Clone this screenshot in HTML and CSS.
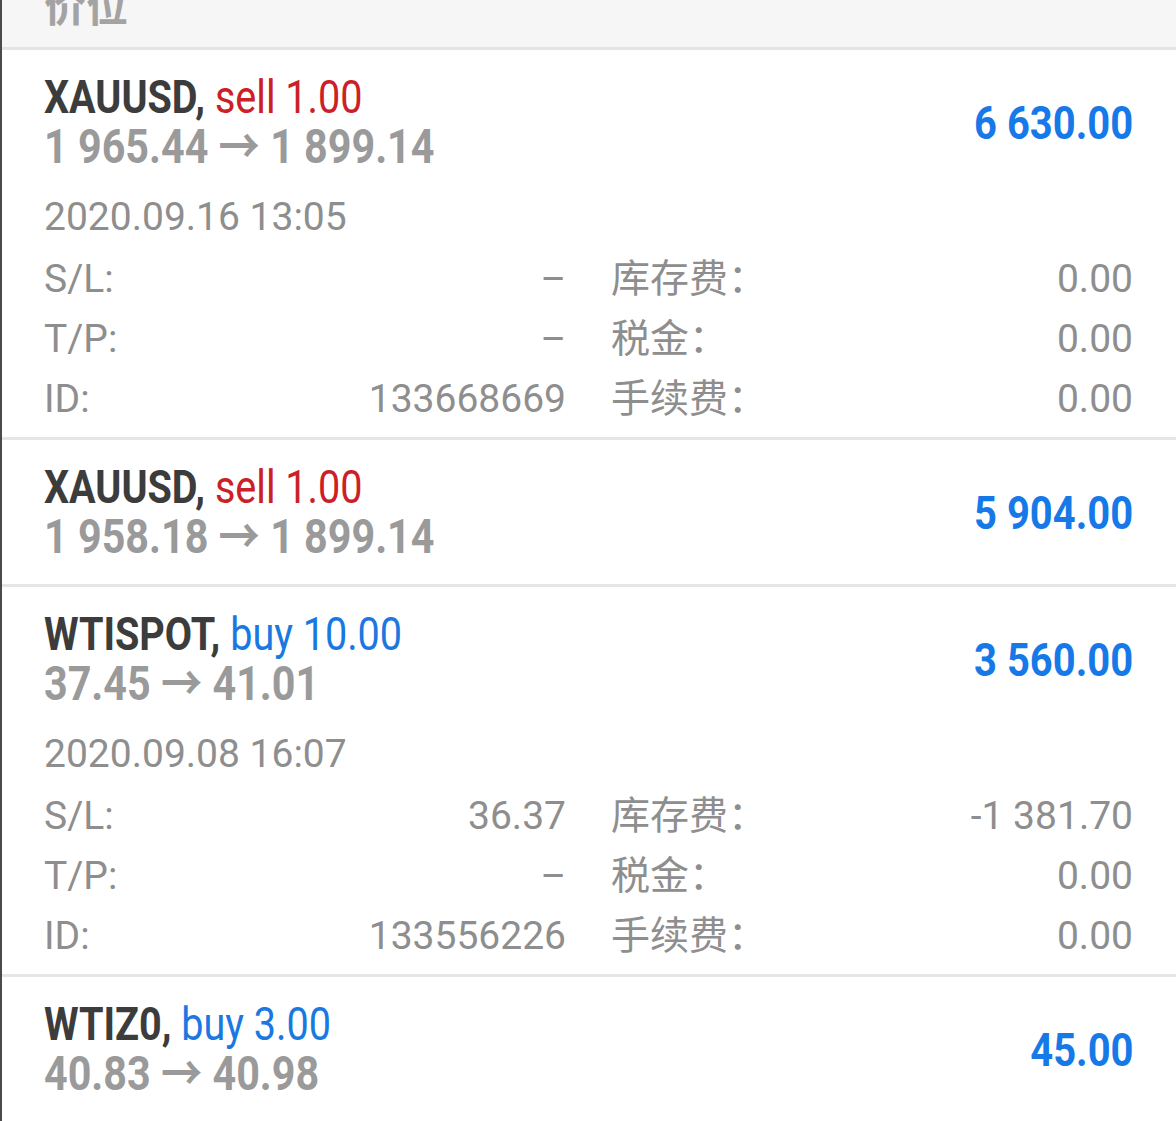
FILE: index.html
```html
<!DOCTYPE html>
<html lang="zh-CN">
<head>
    <meta charset="UTF-8">
    <meta name="viewport" content="width=device-width, initial-scale=1.0">
    <title>交易</title>
    <link rel="stylesheet" href="styles.css">
</head>
<body>
    <div class="screen">
        <div class="section-header">
            <span class="section-title">价位</span>
        </div>

        <div class="deal">
            <div class="deal-head">
                <div class="deal-main">
                    <div class="deal-symbol"><span class="cond"><b>XAUUSD,</b> <span class="sell">sell 1.00</span></span></div>
                    <div class="deal-price"><span class="cond">1 965.44 → 1 899.14</span></div>
                </div>
                <div class="deal-profit"><span class="cond">6 630.00</span></div>
            </div>
            <div class="deal-details">
                <div class="deal-time">2020.09.16 13:05</div>
                <div class="detail-grid">
                    <div class="pair"><span>S/L:</span><span>–</span></div>
                    <div class="pair"><span>库存费：</span><span>0.00</span></div>
                    <div class="pair"><span>T/P:</span><span>–</span></div>
                    <div class="pair"><span>税金：</span><span>0.00</span></div>
                    <div class="pair"><span>ID:</span><span>133668669</span></div>
                    <div class="pair"><span>手续费：</span><span>0.00</span></div>
                </div>
            </div>
        </div>

        <div class="deal collapsed">
            <div class="deal-head">
                <div class="deal-main">
                    <div class="deal-symbol"><span class="cond"><b>XAUUSD,</b> <span class="sell">sell 1.00</span></span></div>
                    <div class="deal-price"><span class="cond">1 958.18 → 1 899.14</span></div>
                </div>
                <div class="deal-profit"><span class="cond">5 904.00</span></div>
            </div>
        </div>

        <div class="deal">
            <div class="deal-head">
                <div class="deal-main">
                    <div class="deal-symbol"><span class="cond"><b>WTISPOT,</b> <span class="buy">buy 10.00</span></span></div>
                    <div class="deal-price"><span class="cond">37.45 → 41.01</span></div>
                </div>
                <div class="deal-profit"><span class="cond">3 560.00</span></div>
            </div>
            <div class="deal-details">
                <div class="deal-time">2020.09.08 16:07</div>
                <div class="detail-grid">
                    <div class="pair"><span>S/L:</span><span>36.37</span></div>
                    <div class="pair"><span>库存费：</span><span>-1 381.70</span></div>
                    <div class="pair"><span>T/P:</span><span>–</span></div>
                    <div class="pair"><span>税金：</span><span>0.00</span></div>
                    <div class="pair"><span>ID:</span><span>133556226</span></div>
                    <div class="pair"><span>手续费：</span><span>0.00</span></div>
                </div>
            </div>
        </div>

        <div class="deal collapsed">
            <div class="deal-head">
                <div class="deal-main">
                    <div class="deal-symbol"><span class="cond"><b>WTIZ0,</b> <span class="buy">buy 3.00</span></span></div>
                    <div class="deal-price"><span class="cond">40.83 → 40.98</span></div>
                </div>
                <div class="deal-profit"><span class="cond">45.00</span></div>
            </div>
        </div>
    </div>
</body>
</html>
```

FILE: styles.css
```css
body {
    margin: 0;
    padding: 0;
    background-color: #fff;
    font-family: Roboto, "Noto Sans CJK SC", sans-serif;
}

.screen {
    height: 1121px;
    overflow: hidden;
    border-left: 2px solid #4a4a4a;
    box-sizing: border-box;
}

.section-header {
    height: 47px;
    overflow: hidden;
    background-color: #f6f6f6;
    border-bottom: 3px solid #e4e4e4;
    padding-left: 42px;
}

.section-title {
    display: block;
    margin-top: -13px;
    font-size: 42px;
    line-height: 42px;
    font-weight: bold;
    color: #a3a3a3;
}

.deal {
    padding: 22px 43px 8px 42px;
    border-bottom: 3px solid #e6e6e6;
}

.deal.collapsed {
    padding-bottom: 22px;
}

.deal-head {
    display: flex;
    align-items: center;
    justify-content: space-between;
}

/* no condensed Roboto installed, so squeeze the regular face */
.cond {
    display: inline-block;
    white-space: nowrap;
    transform: scaleX(0.86);
    transform-origin: left center;
}

.deal-symbol {
    font-size: 46px;
    line-height: 50px;
    color: #3c3c3c;
}

.deal-symbol b {
    font-weight: bold;
}

.sell {
    color: #cc2027;
}

.buy {
    color: #1a78e0;
}

.deal-price {
    font-size: 48px;
    line-height: 50px;
    font-weight: bold;
    color: #9a9a9b;
}

.deal-profit {
    font-size: 47px;
    font-weight: bold;
    color: #1779e8;
}

.deal-profit .cond {
    transform: scaleX(0.85);
    transform-origin: right center;
}

.deal-details {
    margin-top: 15px;
    color: #8e8e8e;
    font-size: 39px;
}

.deal-time {
    line-height: 60px;
    margin-bottom: 2px;
}

.detail-grid {
    display: grid;
    grid-template-columns: 1fr 1fr;
    column-gap: 45px;
    line-height: 60px;
}

.pair {
    display: flex;
    justify-content: space-between;
}
```
